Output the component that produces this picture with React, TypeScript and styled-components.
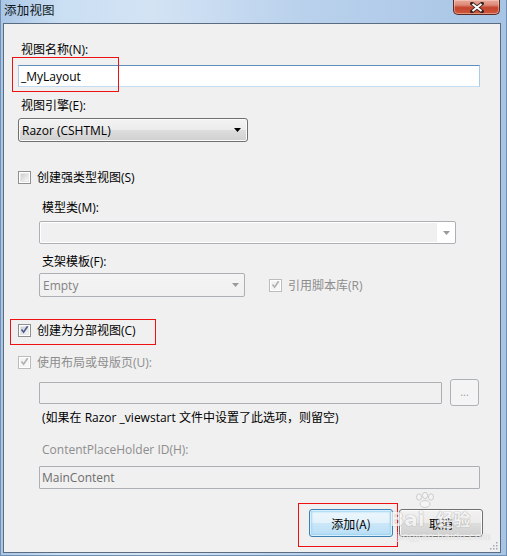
import React from "react";
import styled, { createGlobalStyle, css } from "styled-components";

const Global = createGlobalStyle`
  html, body { margin: 0; padding: 0; background: #ffffff; }
  body {
    font-family: "Open Sans", "Noto Sans CJK SC", sans-serif;
    font-size: 12px;
    color: #000;
  }
  #root { width: 507px; height: 556px; }
`;

const Window = styled.div`
  width: 507px;
  height: 556px;
  box-sizing: border-box;
  display: flex;
  flex-direction: column;
  padding: 0 6px 3px 3px;
  background: linear-gradient(to right, #aac6e6 0%, #cadff3 12%, #d3e3f4 30%, #b9d1ec 60%, #a8c5e6 100%);
  box-shadow: inset 1px 0 0 #6f8fb4, inset -1px 0 0 #6f8fb4, inset 0 -1px 0 #6f8fb4;
  overflow: hidden;
`;

const TitleBar = styled.div`
  height: 23px;
  flex: none;
  display: flex;
  align-items: flex-start;
`;

const TitleText = styled.div`
  font-family: "Noto Sans CJK SC", sans-serif;
  font-size: 12.5px;
  line-height: 20px;
  padding: 0 0 0 1px;
  letter-spacing: 0.2px;
  color: #101820;
`;

const CloseButton = styled.div`
  margin-left: auto;
  margin-right: 1px;
  width: 47px;
  height: 15px;
  box-sizing: border-box;
  border: 1px solid #5a2a24;
  border-top: none;
  border-radius: 0 0 5px 5px;
  background: linear-gradient(#e9a99b 0%, #dd8a78 35%, #c3442c 55%, #cf5a3e 100%);
  box-shadow: inset 0 0 0 1px rgba(255, 220, 210, 0.45);
  display: flex;
  align-items: center;
  justify-content: center;
`;

const Client = styled.div`
  flex: 1;
  position: relative;
  border: 1px solid #5c6c80;
  background: #f0f0f0;
  display: flex;
  flex-direction: column;
  padding: 0 17px 0 14px;
`;

const Label = styled.div<{ $mt: number; $indent?: boolean; $disabled?: boolean }>`
  margin-top: ${(p) => p.$mt}px;
  padding-left: ${(p) => (p.$indent ? 24 : 3)}px;
  line-height: 16px;
  height: 16px;
  white-space: nowrap;
  color: ${(p) => (p.$disabled ? "#8d8d8d" : "#000")};
`;

const TextBox = styled.div<{
  $mt?: number;
  $w: number;
  $h?: number;
  $focused?: boolean;
  $indent?: boolean;
}>`
  margin-top: ${(p) => p.$mt ?? 0}px;
  margin-left: ${(p) => (p.$indent ? 21 : 0)}px;
  width: ${(p) => p.$w}px;
  height: ${(p) => p.$h ?? 22}px;
  box-sizing: border-box;
  flex: none;
  display: flex;
  align-items: center;
  padding-left: 2px;
  white-space: nowrap;
  ${(p) =>
    p.$focused
      ? css`
          background: #ffffff;
          border: 1px solid;
          border-color: #5d8fbd #a9cbe8 #c3dcf0 #a9cbe8;
          color: #000;
        `
      : css`
          background: #f0f0f0;
          border: 1px solid #acb0b4;
          border-radius: 1px;
          color: #6d6d6d;
        `}
`;

const SelectBox = styled.div<{ $mt: number; $w: number }>`
  margin-top: ${(p) => p.$mt}px;
  width: ${(p) => p.$w}px;
  height: 24px;
  box-sizing: border-box;
  border: 1px solid #707070;
  border-radius: 3px;
  background: linear-gradient(#f3f3f3 0%, #ececec 48%, #dddddd 52%, #d0d0d0 100%);
  box-shadow: inset 0 0 0 1px #fbfbfb;
  display: flex;
  align-items: center;
  padding: 0 6px 0 3px;
  white-space: nowrap;
`;

const Arrow = styled.svg`
  margin-left: auto;
  flex: none;
`;

const ModelCombo = styled.div<{ $mt: number; $w: number }>`
  margin-top: ${(p) => p.$mt}px;
  margin-left: 21px;
  width: ${(p) => p.$w}px;
  height: 23px;
  box-sizing: border-box;
  border: 1px solid #acb0b4;
  border-radius: 2px;
  background: #ffffff;
  display: flex;
  align-items: stretch;
`;

const ModelComboText = styled.div`
  flex: 1;
  margin: 1px 0 1px 1px;
  background: #f0f0f0;
`;

const ModelComboArrow = styled.div`
  width: 18px;
  display: flex;
  align-items: center;
  justify-content: center;
`;

const Row = styled.div<{ $mt: number; $h: number; $indent?: boolean }>`
  margin-top: ${(p) => p.$mt}px;
  margin-left: ${(p) => (p.$indent ? 21 : 0)}px;
  height: ${(p) => p.$h}px;
  display: flex;
  align-items: center;
`;

const DisabledCombo = styled.div<{ $w: number }>`
  width: ${(p) => p.$w}px;
  height: 24px;
  box-sizing: border-box;
  border: 1px solid #acb0b4;
  border-radius: 2px;
  background: linear-gradient(#f4f4f4, #f0f0f0);
  display: flex;
  align-items: center;
  padding: 0 5px 0 3px;
  color: #838383;
`;

const CheckRow = styled.div<{ $mt: number; $ml?: number; $disabled?: boolean }>`
  margin-top: ${(p) => p.$mt}px;
  margin-left: ${(p) => p.$ml ?? 0}px;
  height: 16px;
  display: flex;
  align-items: center;
  gap: 6px;
  white-space: nowrap;
  color: ${(p) => (p.$disabled ? "#8d8d8d" : "#000")};
`;

const Box = styled.span<{ $disabled?: boolean }>`
  width: 13px;
  height: 13px;
  box-sizing: border-box;
  flex: none;
  border: 1px solid ${(p) => (p.$disabled ? "#bcbcbc" : "#8e8f8f")};
  background: #ffffff;
  padding: 1px;
  display: flex;
`;

const BoxInner = styled.span<{ $disabled?: boolean }>`
  flex: 1;
  position: relative;
  background: ${(p) =>
    p.$disabled
      ? "linear-gradient(135deg, #f0f0f0, #fafafa)"
      : "linear-gradient(135deg, #cdcdcd, #f7f7f7)"};
  border: 1px solid ${(p) => (p.$disabled ? "#f4f4f4" : "#e8e8e8")};
`;

const Tick = styled.svg`
  position: absolute;
  left: -2px;
  top: -3px;
`;

const SmallButton = styled.div`
  margin-left: 8px;
  width: 29px;
  height: 27px;
  box-sizing: border-box;
  border: 1px solid #adb2b5;
  border-radius: 3px;
  background: #f4f4f4;
  color: #a0a0a0;
  font-size: 11px;
  display: flex;
  align-items: center;
  justify-content: center;
  line-height: 1;
  padding-bottom: 2px;
`;

const ButtonRow = styled.div`
  margin-top: 20px;
  display: flex;
  justify-content: flex-end;
  gap: 6px;
`;

const DialogButton = styled.div<{ $default?: boolean }>`
  width: 84px;
  height: 28px;
  box-sizing: border-box;
  border-radius: 3px;
  display: flex;
  align-items: center;
  justify-content: center;
  font-family: "Noto Sans CJK SC", "Open Sans", sans-serif;
  font-size: 12px;
  ${(p) =>
    p.$default
      ? css`
          border: 1px solid #3c7fb1;
          background: linear-gradient(#eef7fc 0%, #e3f2fb 48%, #cbe7f8 52%, #b8def5 100%);
          box-shadow: inset 0 0 0 1px #d8f0fd, inset 0 0 2px 2px #9fd6f4;
        `
      : css`
          border: 1px solid #707070;
          background: linear-gradient(#f2f2f2 0%, #ebebeb 48%, #dddddd 52%, #cfcfcf 100%);
          box-shadow: inset 0 0 0 1px #fcfcfc;
        `}
`;

const RedMark = styled.div`
  position: absolute;
  border: 1px solid #ee1111;
  pointer-events: none;
`;

const Watermark = styled.div`
  position: absolute;
  left: 383px;
  top: 468px;
  width: 110px;
  height: 54px;
  pointer-events: none;
  opacity: 0.75;
`;

const WmMain = styled.div`
  position: absolute;
  left: 2px;
  top: 16px;
  display: flex;
  align-items: baseline;
  gap: 3px;
  font-family: "DejaVu Sans", sans-serif;
  font-weight: bold;
  font-size: 20px;
  color: #f6f6f6;
  text-shadow: 0 0 1px #9a9a9a, 0 0 1px #9a9a9a;
  line-height: 22px;
`;

const WmCjk = styled.span`
  font-family: "Noto Sans CJK SC", sans-serif;
  font-size: 17px;
  font-weight: bold;
`;

const WmUrl = styled.div`
  position: absolute;
  left: 10px;
  top: 38px;
  font-family: "Liberation Sans", sans-serif;
  font-size: 11px;
  color: #f4f4f4;
  text-shadow: 0 0 1px #b0b0b0;
  letter-spacing: 0.3px;
`;

const Grip = styled.svg`
  position: absolute;
  right: 2px;
  bottom: 2px;
`;

type CheckProps = { checked?: boolean; disabled?: boolean };
const Checkbox: React.FC<CheckProps> = ({ checked, disabled }) => (
  <Box $disabled={disabled}>
    <BoxInner $disabled={disabled}>
      {checked && (
        <Tick width="11" height="11" viewBox="0 0 11 11">
          <path
            d="M2.5 5.5 L4.6 8.2 L8.6 2.2"
            fill="none"
            stroke={disabled ? "#b0b0b0" : "#4b5d8f"}
            strokeWidth="1.6"
          />
        </Tick>
      )}
    </BoxInner>
  </Box>
);

const DownArrow: React.FC<{ color: string }> = ({ color }) => (
  <Arrow width="7" height="4" viewBox="0 0 7 4">
    <path d="M0 0 H7 L3.5 4 Z" fill={color} />
  </Arrow>
);

export default function App() {
  return (
    <>
      <Global />
      <Window>
        <TitleBar>
          <TitleText>添加视图</TitleText>
          <CloseButton>
            <svg width="14" height="11" viewBox="0 0 14 11">
              <path
                d="M2 1.5 L12 9.5 M12 1.5 L2 9.5"
                stroke="#3a2420"
                strokeWidth="3.6"
                strokeLinecap="square"
              />
              <path
                d="M2.5 2 L11.5 9 M11.5 2 L2.5 9"
                stroke="#ffffff"
                strokeWidth="2"
              />
            </svg>
          </CloseButton>
        </TitleBar>
        <Client>
          <Label $mt={18}>视图名称(N):</Label>
          <TextBox $mt={7} $w={462} $focused>
            _MyLayout
          </TextBox>

          <Label $mt={11}>视图引擎(E):</Label>
          <SelectBox $mt={4} $w={230}>
            Razor (CSHTML)
            <DownArrow color="#000" />
          </SelectBox>

          <CheckRow $mt={27}>
            <Checkbox />
            创建强类型视图(S)
          </CheckRow>

          <Label $mt={15} $indent>
            模型类(M):
          </Label>
          <ModelCombo $mt={5} $w={417}>
            <ModelComboText />
            <ModelComboArrow>
              <svg width="7" height="4" viewBox="0 0 7 4">
                <path d="M0 0 H7 L3.5 4 Z" fill="#9a9a9a" />
              </svg>
            </ModelComboArrow>
          </ModelCombo>

          <Label $mt={10} $indent>
            支架模板(F):
          </Label>
          <Row $mt={3} $h={24} $indent>
            <DisabledCombo $w={206}>
              Empty
              <DownArrow color="#9a9a9a" />
            </DisabledCombo>
            <CheckRow $mt={0} $ml={24} $disabled>
              <Checkbox checked disabled />
              引用脚本库(R)
            </CheckRow>
          </Row>

          <CheckRow $mt={25}>
            <Checkbox checked />
            创建为分部视图(C)
          </CheckRow>

          <CheckRow $mt={16} $disabled>
            <Checkbox checked disabled />
            使用布局或母版页(U):
          </CheckRow>

          <Row $mt={9} $h={27} $indent>
            <TextBox $w={403} />
            <SmallButton>...</SmallButton>
          </Row>

          <Label $mt={4} $indent>
            (如果在 Razor _viewstart 文件中设置了此选项，则留空)
          </Label>

          <Label $mt={16} $indent $disabled>
            ContentPlaceHolder ID(H):
          </Label>
          <TextBox $mt={8} $w={441} $h={23} $indent>
            MainContent
          </TextBox>

          <ButtonRow>
            <DialogButton $default>添加(A)</DialogButton>
            <DialogButton>取消</DialogButton>
          </ButtonRow>

          <RedMark style={{ left: 8, top: 33, width: 105, height: 33 }} />
          <RedMark style={{ left: 6, top: 295, width: 144, height: 24 }} />
          <RedMark style={{ left: 294, top: 479, width: 98, height: 42 }} />

          <Watermark>
            <svg
              width="30"
              height="16"
              viewBox="0 0 30 16"
              style={{ position: "absolute", left: 24, top: 0 }}
            >
              <g fill="#f6f6f6" stroke="#b4b4b4" strokeWidth="0.8">
                <ellipse cx="8" cy="5" rx="2.5" ry="3.2" />
                <ellipse cx="14" cy="3.5" rx="2.5" ry="3.2" />
                <ellipse cx="20" cy="5" rx="2.5" ry="3.2" />
                <ellipse cx="14" cy="12" rx="5" ry="3.5" />
              </g>
            </svg>
            <WmMain>
              Bai<span style={{ width: 6 }} />
              <WmCjk>经验</WmCjk>
            </WmMain>
            <WmUrl>jingyan.baidu.com</WmUrl>
          </Watermark>

          <Grip width="9" height="9" viewBox="0 0 9 9">
            <g fill="#a0a8b4">
              <rect x="7" y="1" width="1.5" height="1.5" />
              <rect x="4" y="4" width="1.5" height="1.5" />
              <rect x="7" y="4" width="1.5" height="1.5" />
              <rect x="1" y="7" width="1.5" height="1.5" />
              <rect x="4" y="7" width="1.5" height="1.5" />
              <rect x="7" y="7" width="1.5" height="1.5" />
            </g>
          </Grip>
        </Client>
      </Window>
    </>
  );
}
